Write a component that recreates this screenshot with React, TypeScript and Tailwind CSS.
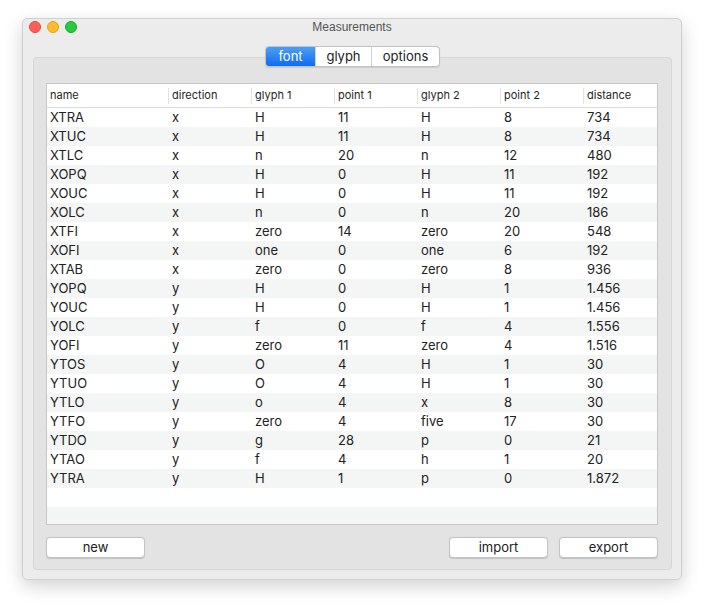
import React from "react";

type Row = [string, string, string, string, string, string, string];

const COLUMNS = ["name", "direction", "glyph 1", "point 1", "glyph 2", "point 2", "distance"];

const ROWS: Row[] = [
  ["XTRA", "x", "H", "11", "H", "8", "734"],
  ["XTUC", "x", "H", "11", "H", "8", "734"],
  ["XTLC", "x", "n", "20", "n", "12", "480"],
  ["XOPQ", "x", "H", "0", "H", "11", "192"],
  ["XOUC", "x", "H", "0", "H", "11", "192"],
  ["XOLC", "x", "n", "0", "n", "20", "186"],
  ["XTFI", "x", "zero", "14", "zero", "20", "548"],
  ["XOFI", "x", "one", "0", "one", "6", "192"],
  ["XTAB", "x", "zero", "0", "zero", "8", "936"],
  ["YOPQ", "y", "H", "0", "H", "1", "1.456"],
  ["YOUC", "y", "H", "0", "H", "1", "1.456"],
  ["YOLC", "y", "f", "0", "f", "4", "1.556"],
  ["YOFI", "y", "zero", "11", "zero", "4", "1.516"],
  ["YTOS", "y", "O", "4", "H", "1", "30"],
  ["YTUO", "y", "O", "4", "H", "1", "30"],
  ["YTLO", "y", "o", "4", "x", "8", "30"],
  ["YTFO", "y", "zero", "4", "five", "17", "30"],
  ["YTDO", "y", "g", "28", "p", "0", "21"],
  ["YTAO", "y", "f", "4", "h", "1", "20"],
  ["YTRA", "y", "H", "1", "p", "0", "1.872"],
];

const grid = "grid grid-cols-[121px_83px_83px_83px_83px_83px_1fr]";

function Button({ label }: { label: string }) {
  return (
    <button className="w-[99px] h-[21px] rounded-[4px] bg-white border border-[#c4c4c4] shadow-[0_0.5px_1px_rgba(0,0,0,0.15)] text-[13px] text-[#222] leading-none">
      {label}
    </button>
  );
}

export default function App() {
  return (
    <div
      className="w-[705px] h-[607px] bg-white pt-[18px] pl-[22px]"
      style={{ fontFamily: "Inter, 'Liberation Sans', sans-serif" }}
    >
      <div className="w-[660px] h-[562px] rounded-[5px] bg-[#ececec] border border-[#d0d0d0] shadow-[0_6px_18px_rgba(0,0,0,0.18)] flex flex-col">
        {/* title bar */}
        <div className="relative h-[22px] flex items-center justify-center">
          <div className="absolute left-[6px] top-[2px] flex gap-[6px]">
            <span className="w-[12px] h-[12px] rounded-full bg-[#fe5f57] border border-[#e2463f]" />
            <span className="w-[12px] h-[12px] rounded-full bg-[#febc2e] border border-[#e1a116]" />
            <span className="w-[12px] h-[12px] rounded-full bg-[#28c840] border border-[#12ac28]" />
          </div>
          <span
            className="text-[12px] text-[#555] leading-none -mt-[6px]"
            style={{ fontFamily: "'Liberation Sans', Arial, sans-serif" }}
          >
            Measurements
          </span>
        </div>

        <div className="flex-1 flex flex-col pl-[10px] pr-[9px] pb-[9px]">
          {/* tabs */}
          <div className="relative z-10 mt-[5px] h-[21px] flex justify-center">
            <div className="flex h-[21px] rounded-[4px] border border-[#c2c2c2] bg-white overflow-hidden text-[13px] text-[#222] shadow-[0_0.5px_1px_rgba(0,0,0,0.1)]">
              <div className="w-[49px] flex items-center justify-center bg-gradient-to-b from-[#4a9df8] to-[#0b6bf0] text-white">font</div>
              <div className="w-[56px] flex items-center justify-center border-l border-[#d4d4d4]">glyph</div>
              <div className="w-[68px] flex items-center justify-center border-l border-[#d4d4d4]">options</div>
            </div>
          </div>

          {/* tab box */}
          <div className="-mt-[10px] flex-1 flex flex-col bg-[#e3e3e3] border border-[#d6d6d6] rounded-[4px] pt-[25px] pl-[12px] pr-[13px]">
            <div className="h-[442px] bg-white border border-[#c6c6c6] overflow-hidden">
              <div className={`${grid} h-[24px] items-center border-b border-[#dcdcdc] text-[11px] text-[#262626]`}>
                {COLUMNS.map((c, i) => (
                  <div key={c} className={`h-[16px] flex items-center pl-[3px] ${i > 0 ? "border-l border-[#e2e2e2]" : ""}`}>
                    {c}
                  </div>
                ))}
              </div>
              {ROWS.map((r, i) => (
                <div key={r[0]} className={`${grid} h-[19px] items-center text-[13px] text-[#222] ${i % 2 ? "bg-[#f4f5f5]" : "bg-white"}`}>
                  {r.map((v, j) => (
                    <div key={j} className={j === 0 ? "pl-[3px]" : "pl-[4px]"}>
                      {v}
                    </div>
                  ))}
                </div>
              ))}
              <div className="h-[19px] bg-white" />
              <div className="h-[19px] bg-[#f4f5f5]" />
            </div>

            <div className="mt-[12px] flex">
              <Button label="new" />
              <div className="ml-auto flex gap-[11px]">
                <Button label="import" />
                <Button label="export" />
              </div>
            </div>
          </div>
        </div>
      </div>
    </div>
  );
}
